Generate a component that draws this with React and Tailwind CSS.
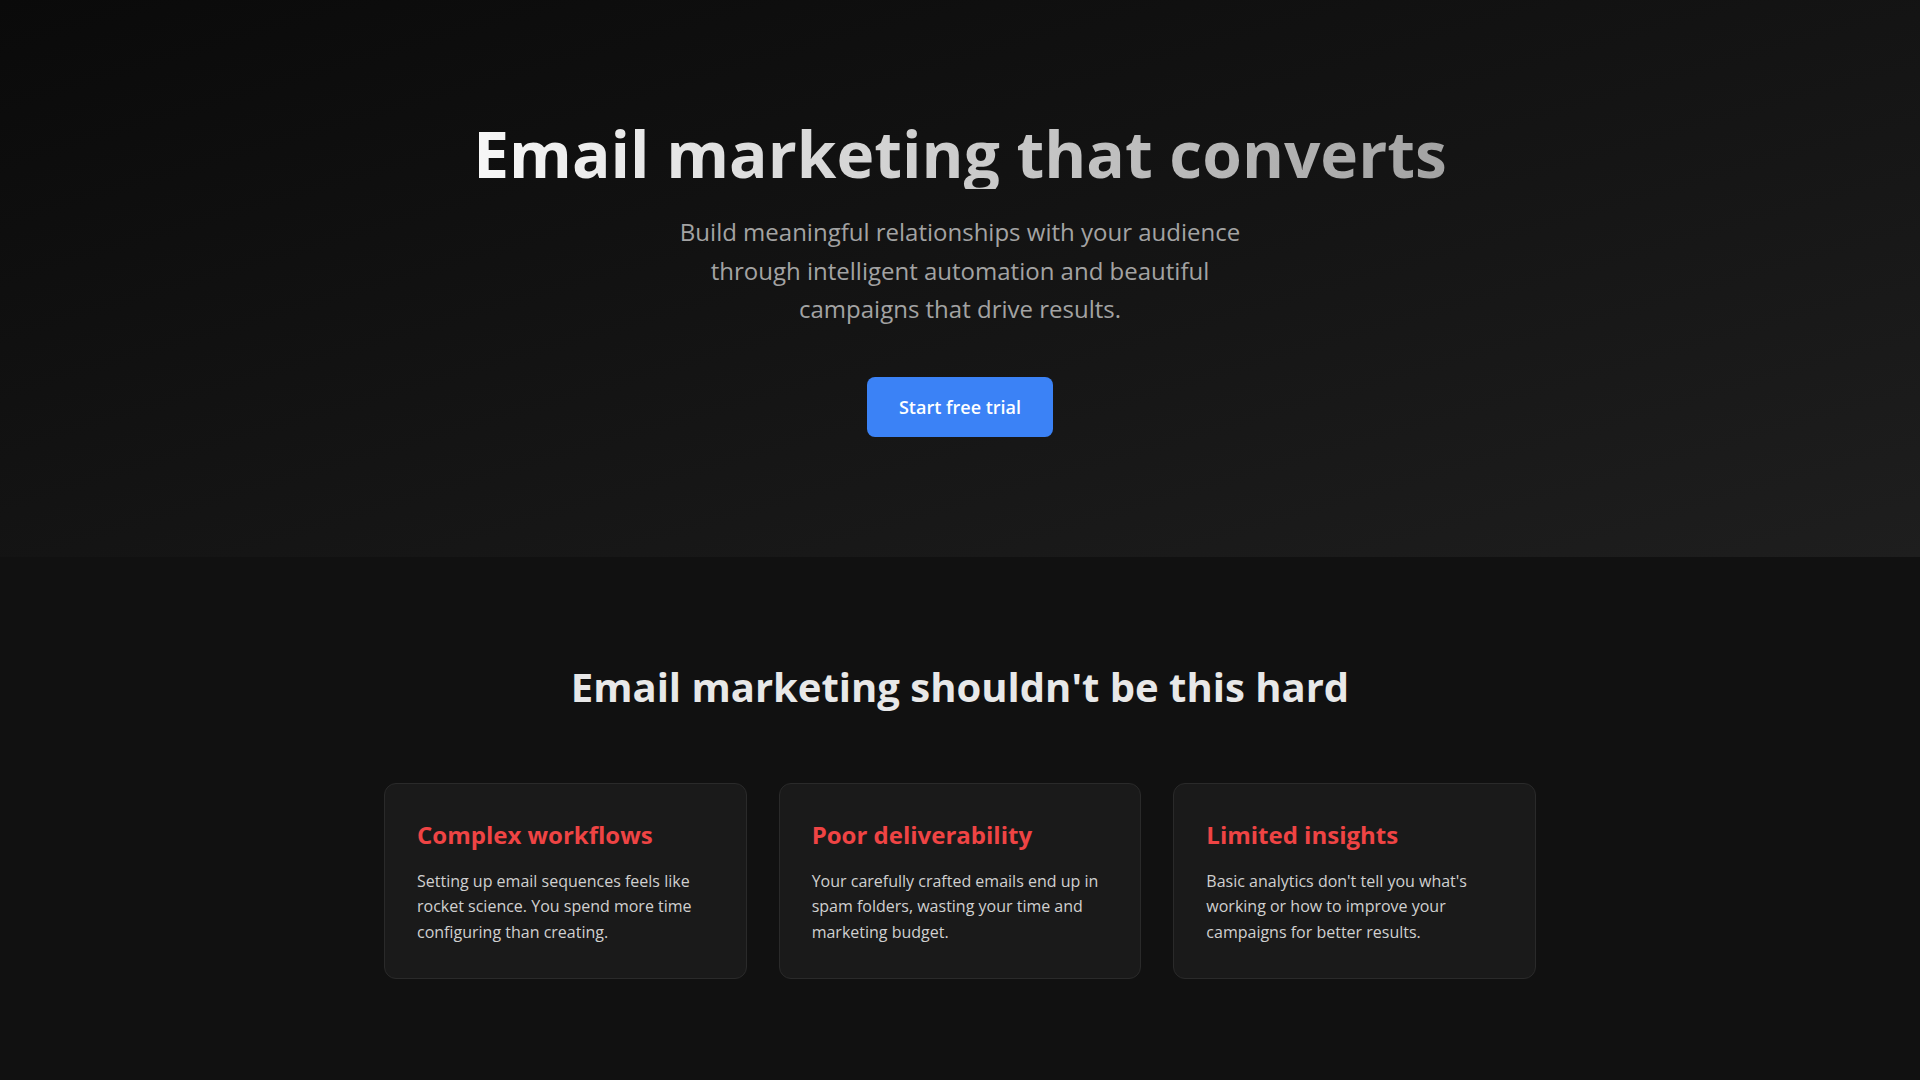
const problems = [
  {
    title: "Complex workflows",
    text: "Setting up email sequences feels like rocket science. You spend more time configuring than creating.",
  },
  {
    title: "Poor deliverability",
    text: "Your carefully crafted emails end up in spam folders, wasting your time and marketing budget.",
  },
  {
    title: "Limited insights",
    text: "Basic analytics don't tell you what's working or how to improve your campaigns for better results.",
  },
];

const Hero = () => {
  return (
    <section className="bg-linear-to-br from-[#0a0a0a] to-[#1e1e1e] px-6 pt-[119px] pb-[120px] text-center">
      <h1 className="inline-block bg-linear-to-r from-[#f7f7f7] to-[#a3a3a3] bg-clip-text text-[64px] font-bold leading-[1.1] text-transparent">
        Email marketing that converts
      </h1>
      <p className="mx-auto mt-6 max-w-[580px] text-2xl font-normal leading-[1.6] text-[#a3a3a3]">
        Build meaningful relationships with your audience through intelligent
        automation and beautiful campaigns that drive results.
      </p>
      <div className="mt-12">
        <button className="rounded-lg bg-[#3b82f6] px-8 py-4 text-lg font-semibold leading-[1.6] text-white hover:bg-[#2563eb]">
          Start free trial
        </button>
      </div>
    </section>
  );
};

const Problems = () => {
  return (
    <section className="bg-[#111111] px-6 pt-[98px] pb-24">
      <h2 className="mb-16 text-center text-[40px] font-bold leading-[1.6] text-[#e8e8e8]">
        Email marketing shouldn't be this hard
      </h2>
      <div className="mx-auto grid max-w-6xl grid-cols-3 gap-8">
        {problems.map((p) => (
          <div
            key={p.title}
            className="rounded-xl border border-[#2a2a2a] bg-[#1a1a1a] p-8"
          >
            <h3 className="mb-3.5 text-2xl font-bold leading-[1.6] text-[#ef4444]">{p.title}</h3>
            <p className="text-base leading-[1.6] text-[#d0d0d0]">{p.text}</p>
          </div>
        ))}
      </div>
    </section>
  );
};

export default function App() {
  return (
    <div className="min-h-screen bg-[#111111] font-['Open_Sans',sans-serif] leading-[1.6] antialiased">
      <Hero />
      <Problems />
    </div>
  );
}
